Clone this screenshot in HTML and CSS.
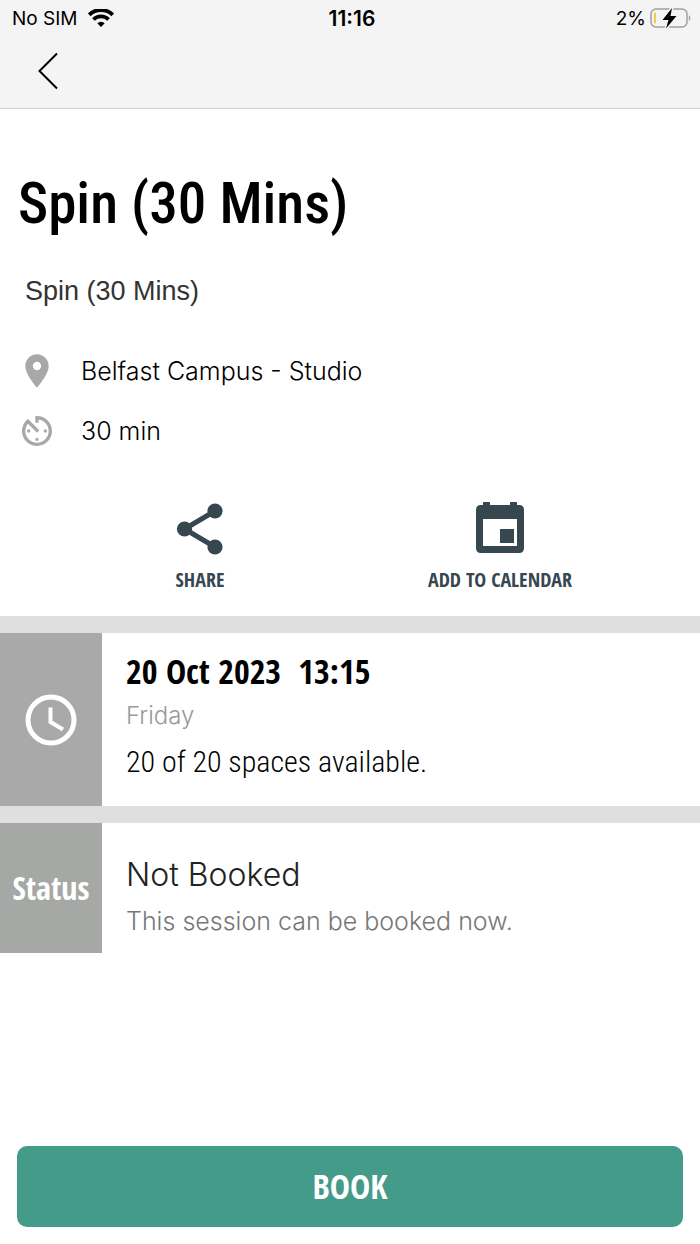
FILE: index.html
```
<!DOCTYPE html>
<html lang="en">
<head>
<meta charset="utf-8">
<meta name="viewport" content="width=device-width, initial-scale=1">
<title>Spin (30 Mins)</title>
<link rel="stylesheet" href="styles.css">
</head>
<body>
<div class="screen">
  <header class="top">
    <div class="statusbar">
      <div class="carrier">
        <span>No SIM</span>
        <svg width="26" height="19" viewBox="0 0 26 19" aria-hidden="true">
          <path d="M1.200 5.800a17 17 0 0 1 23.600 0" fill="none" stroke="#000" stroke-width="4"/>
          <path d="M5.500 10.500a10.800 10.800 0 0 1 15 0" fill="none" stroke="#000" stroke-width="3.800"/>
          <path d="M9.300 14.300a5.300 5.300 0 0 1 7.400 0L13 18z"/>
        </svg>
      </div>
      <span class="clock">11:16</span>
      <div class="battery">
        <span>2%</span>
        <svg width="42" height="22" viewBox="0 0 42 22" aria-hidden="true">
          <rect x="1" y="2" width="36" height="18" rx="5" fill="none" stroke="#a0a0a0" stroke-width="1.500"/>
          <path d="M38.800 8q3.200 3 0 6z" fill="#a0a0a0"/>
          <rect x="4" y="5.500" width="2" height="11" rx="1" fill="#f7c84a"/>
          <path d="M22 1L12.500 13h6L16 21.500 26.500 9h-6z" stroke="#f4f4f4" stroke-width="3"/>
          <path d="M22 1L12.500 13h6L16 21.500 26.500 9h-6z"/>
        </svg>
      </div>
    </div>
    <nav class="navbar">
      <button class="back" type="button" aria-label="Back">
        <svg width="22" height="38" viewBox="0 0 22 38" aria-hidden="true"><path d="M21 1.500L3.500 19 21 36.500" fill="none" stroke="#000" stroke-width="2"/></svg>
      </button>
    </nav>
  </header>

  <main class="content">
    <section class="intro">
      <h1 class="title">Spin (30 Mins)</h1>
      <p class="subtitle">Spin (30 Mins)</p>
      <ul class="facts">
        <li class="fact">
          <svg class="fact-icon" width="40" height="40" viewBox="0 0 24 24" aria-hidden="true"><path fill="#a8a8a8" d="M12 2C8.130 2 5 5.130 5 9c0 5.250 7 13 7 13s7-7.750 7-13c0-3.870-3.130-7-7-7zm0 9.500a2.500 2.500 0 1 1 0-5 2.500 2.500 0 0 1 0 5z"/></svg>
          <span>Belfast Campus - Studio</span>
        </li>
        <li class="fact">
          <svg class="fact-icon" width="40" height="40" viewBox="0 0 24 24" aria-hidden="true"><path fill="#a8a8a8" d="M11 17c0 .55.45 1 1 1s1-.45 1-1-.45-1-1-1-1 .45-1 1zm0-14v4h2V5.080c3.390.49 6 3.390 6 6.920 0 3.870-3.130 7-7 7s-7-3.130-7-7c0-1.680.59-3.220 1.580-4.420L12 13l1.410-1.410-6.800-6.800v.02C4.420 6.450 3 9.050 3 12c0 4.970 4.020 9 9 9a9 9 0 0 0 0-18h-1zm7 9c0-.55-.45-1-1-1s-1 .45-1 1 .45 1 1 1 1-.45 1-1zM6 12c0 .55.45 1 1 1s1-.45 1-1-.45-1-1-1-1 .45-1 1z"/></svg>
          <span>30 min</span>
        </li>
      </ul>
      <div class="actions">
        <button class="action" type="button">
          <svg width="60" height="60" viewBox="0 0 60 60" aria-hidden="true"><g fill="#37474f"><circle cx="45" cy="12" r="7.600"/><circle cx="14.500" cy="30" r="7.600"/><circle cx="45" cy="48" r="7.600"/></g><path d="M45 12L14.500 30 45 48" fill="none" stroke="#37474f" stroke-width="5"/></svg>
          <span>SHARE</span>
        </button>
        <button class="action" type="button">
          <svg width="60" height="60" viewBox="0 0 60 60" aria-hidden="true"><path fill="#37474f" fill-rule="evenodd" d="M13 3h7v3h20V3h7v3h2q5 0 5 5v38q0 5-5 5H11q-5 0-5-5V11q0-5 5-5h2zM13 20v27h34V20zM30 30h14v14H30z"/></svg>
          <span>ADD TO CALENDAR</span>
        </button>
      </div>
    </section>

    <section class="row">
      <div class="tile">
        <svg width="60" height="60" viewBox="0 0 60 60" aria-hidden="true" fill="none" stroke="#fff"><circle cx="30" cy="30" r="23" stroke-width="5"/><path d="M29.500 17.500V32l12.500 7.500" stroke-width="4"/></svg>
      </div>
      <div class="details">
        <h2 class="date">20 Oct 2023&nbsp; 13:15</h2>
        <p class="day">Friday</p>
        <p class="spaces">20 of 20 spaces available.</p>
      </div>
    </section>

    <section class="row">
      <div class="tile tile-status">Status</div>
      <div class="details details-status">
        <h2 class="state">Not Booked</h2>
        <p class="note">This session can be booked now.</p>
      </div>
    </section>
  </main>

  <footer class="footer">
    <button class="book" type="button">BOOK</button>
  </footer>
</div>
</body>
</html>
```
FILE: styles.css
```
:root {
  --body: "Liberation Sans", Arial, sans-serif;
  --light: Inter, "Liberation Sans", sans-serif;
  --condensed: "Roboto Condensed", sans-serif;
  --humanist: "Open Sans Condensed", "Roboto Condensed", sans-serif;
}

* { box-sizing: border-box; }

body {
  margin: 0;
  background: #fff;
  color: #000;
  font-family: var(--body);
}

h1, h2, p, ul { margin: 0; padding: 0; }
ul { list-style: none; }
button { border: 0; padding: 0; background: none; color: inherit; }
svg { display: block; flex: none; }

.screen {
  display: flex;
  flex-direction: column;
  min-height: 100vh;
}

.top {
  background: #f4f4f4;
  border-bottom: 1px solid #cfcfcf;
}

.statusbar {
  display: grid;
  grid-template-columns: 1fr auto 1fr;
  align-items: center;
  height: 36px;
  padding: 0 8px 0 12px;
  font-family: Inter, sans-serif;
  font-size: 19px;
}

.carrier, .battery {
  display: flex;
  align-items: center;
  gap: 10px;
}

.battery { justify-content: flex-end; gap: 4px; }
.clock { font-size: 21px; font-weight: 600; }

.navbar { padding: 16px 36px 18px; }
.back { display: block; }

.content { flex: 1; }

.intro { padding: 60px 0 24px; }

.title {
  padding: 0 18px;
  font: 500 57px/70px var(--condensed);
}

.subtitle {
  padding: 0 25px;
  margin-top: 36px;
  color: #333;
  font-size: 27px;
  line-height: 32px;
}

.facts {
  display: grid;
  gap: 20px;
  padding: 0 17px;
  margin-top: 44px;
}

.fact {
  display: flex;
  align-items: center;
  gap: 24px;
  font: 300 25px/40px var(--light);
}

.actions {
  display: grid;
  grid-template-columns: 1fr 1fr;
  margin: 48px 50px 0;
}

.action {
  display: grid;
  justify-items: center;
  gap: 9px;
  color: #37474f;
  font: 700 20px/24px var(--humanist);
}

.row {
  display: flex;
  border-top: 17px solid #dfdfdf;
}

.tile {
  display: flex;
  align-items: center;
  justify-content: center;
  flex: 0 0 102px;
  background: #a9a9a9;
}

.tile-status {
  background: #a6a8a5;
  color: #fff;
  font: 700 32px/40px var(--humanist);
}

.details { padding: 18px 24px 22px; }

.date { font: 700 34px/40px var(--humanist); }

.day {
  margin: 9px 0 8px;
  color: #999;
  font: 300 24px/32px var(--light);
}

.spaces { font: 300 30px/44px var(--condensed); }

.details-status { padding: 32px 24px 14px; }

.state {
  color: #222;
  font: 300 32px/40px var(--light);
}

.note {
  margin-top: 8px;
  color: #777;
  font: 300 25px/36px var(--light);
}

.footer { padding: 17px; }

.book {
  display: block;
  width: 100%;
  border-radius: 10px;
  background: #459b8a;
  color: #fff;
  font: 700 34px/81px var(--humanist);
}
```
